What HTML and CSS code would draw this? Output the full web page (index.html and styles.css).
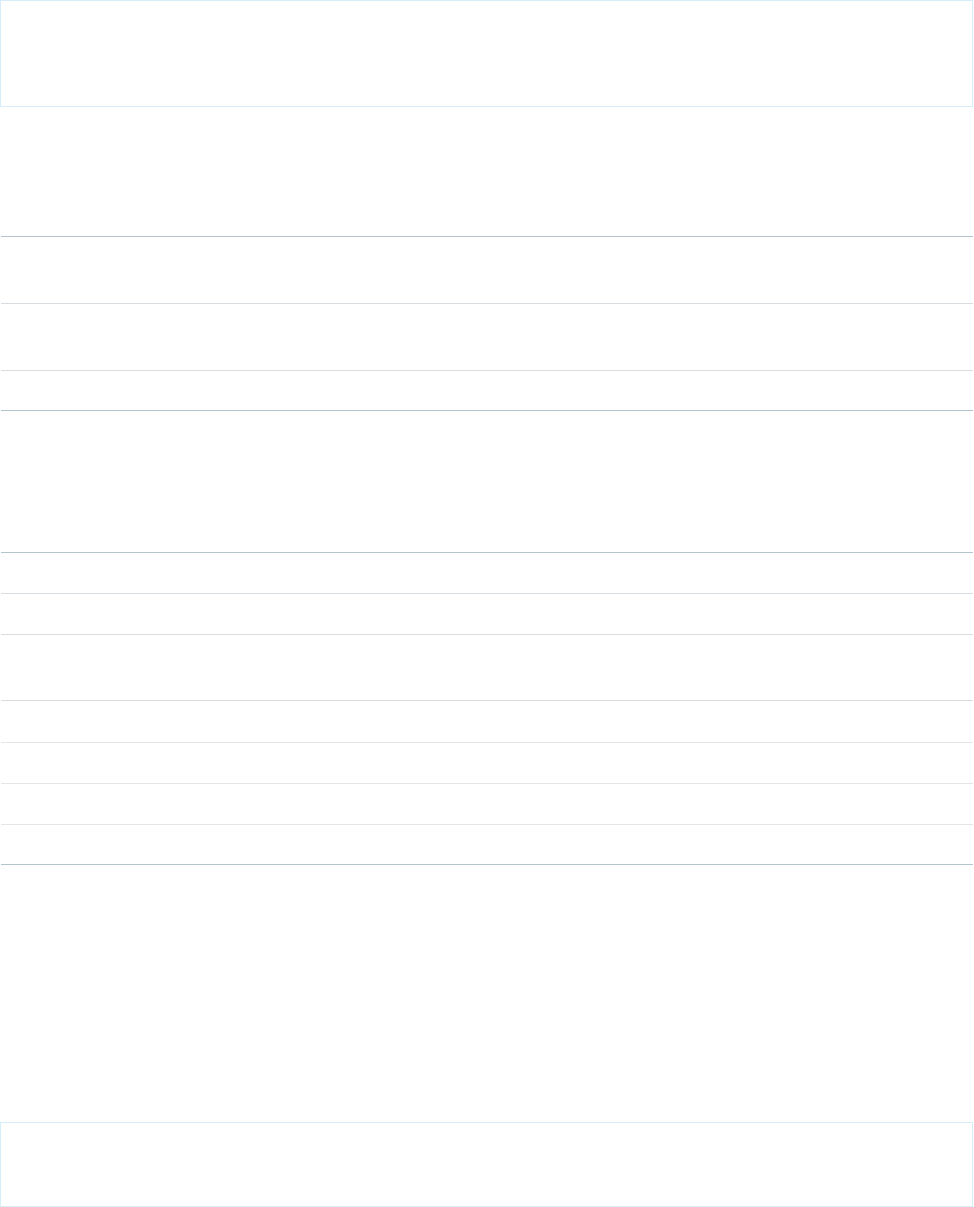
FILE: index.html
```html
<!DOCTYPE html>
<html>
<head>
    <title>Page</title>
    <link rel="stylesheet" href="styles.css">
</head>
<body>
    <!-- Header panel -->
    <div class="panel panel-top"></div>

    <!-- First table -->
    <div class="table table-one">
        <div class="row row-tall"></div>
        <div class="row row-tall"></div>
        <div class="row row-end"></div>
    </div>

    <!-- Second table -->
    <div class="table table-two">
        <div class="row row-short"></div>
        <div class="row row-short"></div>
        <div class="row row-mid"></div>
        <div class="row row-faint row-short2"></div>
        <div class="row row-faint row-short"></div>
        <div class="row row-faint row-short"></div>
        <div class="row row-end row-last"></div>
    </div>

    <!-- Footer panel -->
    <div class="panel panel-bottom"></div>
</body>
</html>
```

FILE: styles.css
```css
* {
    box-sizing: border-box;
}

body {
    margin: 0;
    background-color: #fff;
    font-family: "Liberation Sans", Arial, sans-serif;
}

.panel {
    width: 973px;
    border: 1px solid #d6eef9;
}

.panel-top {
    height: 107px;
}

.panel-bottom {
    height: 85px;
    margin-top: 257px;
}

.table {
    margin-left: 1px;
    width: 972px;
    border-top: 1px solid #b4c6cd;
}

.table-one {
    margin-top: 129px;
}

.table-two {
    margin-top: 141px;
}

.row {
    border-bottom: 1px solid #d7dde0;
}

.row-faint {
    border-bottom-color: #e2e6e8;
}

.row-end {
    border-bottom-color: #b4c6cd;
}

.table-one .row-tall {
    height: 67px;
}

.table-one .row-end {
    height: 40px;
}

.row-short {
    height: 41px;
}

.row-short2 {
    height: 42px;
}

.row-mid {
    height: 66px;
}

.row-last {
    height: 40px;
}
```
